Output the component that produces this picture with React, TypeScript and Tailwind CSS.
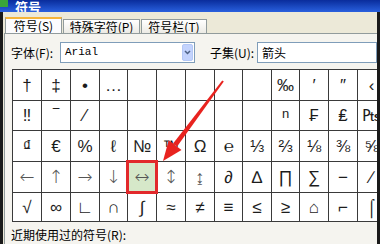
import React from "react"

const rows = [
  ["†", "‡", "•", "…", "", "", "", "", "", "‰", "′", "″", "‹"],
  ["‼", "‾", "⁄", "", "", "", "", "", "", "ⁿ", "₣", "₤", "₧"],
  ["₫", "€", "%", "ℓ", "№", "™", "Ω", "℮", "⅓", "⅔", "⅛", "⅜", "⅝"],
  ["←", "↑", "→", "↓", "↔", "↕", "↨", "∂", "∆", "∏", "∑", "−", "∕"],
  ["√", "∞", "∟", "∩", "∫", "≈", "≠", "≡", "≤", "≥", "⌂", "⌐", "⌠"],
]

const arrows = "←↑→↓↔↕↨"

const cjk = "font-['SimSun','Noto_Sans_CJK_SC',sans-serif]"

export default function App() {
  return (
    <div className="relative w-[380px] h-[244px] overflow-hidden bg-[#ECE9D8] flex flex-col">
      {/* Title bar */}
      <div className="h-[12px] shrink-0 bg-gradient-to-b from-[#0a2c9c] to-[#2a60de] flex items-end overflow-hidden">
        <div className="w-[8px] h-[7px] bg-[#3aa53a] self-start" />
        <span className={`ml-[7px] -mb-[1px] text-[13px] leading-[13px] font-bold text-white ${cjk}`}>符号</span>
      </div>

      <div className="flex flex-1 min-h-0">
        <div className="w-[3px] bg-[#1a1a1a]" />
        <div className="flex-1 min-w-0 flex flex-col overflow-hidden">
          {/* Tabs */}
          <div className="mt-[5px] h-[16px] flex items-end pl-[2px] shrink-0">
            <div className={`h-[16px] w-[57px] bg-[#fcfcfe] border-t-2 border-t-[#f5b43a] border-x border-[#919b9c] flex items-center justify-center text-[12px] text-black ${cjk}`}>
              符号(S)
            </div>
            <div className={`ml-[1px] h-[14px] w-[77px] bg-gradient-to-b from-white to-[#ecebe5] border-t border-x border-[#919b9c] flex items-center justify-center text-[12px] text-black ${cjk}`}>
              特殊字符(P)
            </div>
            <div className={`ml-[1px] h-[14px] w-[66px] bg-gradient-to-b from-white to-[#ecebe5] border-t border-x border-[#919b9c] flex items-center justify-center text-[12px] text-black ${cjk}`}>
              符号栏(T)
            </div>
          </div>

          {/* Panel */}
          <div className="flex-1 bg-[#f5f4ef] border-t border-l border-[#919b9c] ml-[1px] flex flex-col">
            <div className="mt-[8px] h-[21px] flex items-center">
              <span className={`ml-[6px] w-[49px] text-[12px] text-black ${cjk}`}>字体(F):</span>
              <div className="w-[135px] h-[21px] bg-white border border-[#7f9db9] flex items-center justify-between">
                <span className="ml-[4px] text-[11px] font-['Liberation_Mono',monospace] text-black">Arial</span>
                <div className="w-[11px] h-[17px] mr-[1px] bg-[#c3d3fd] border border-[#b4c8f6] rounded-[2px] flex items-center justify-center">
                  <svg width="7" height="5" viewBox="0 0 7 5">
                    <path d="M1 1 L3.5 3.5 L6 1" stroke="#4d6185" strokeWidth="1.5" fill="none" />
                  </svg>
                </div>
              </div>
              <span className={`ml-[15px] w-[47px] text-[12px] text-black ${cjk}`}>子集(U):</span>
              <div className="flex-1 h-[21px] bg-white border border-[#7f9db9] flex items-center">
                <span className={`ml-[4px] text-[12px] text-black ${cjk}`}>箭头</span>
              </div>
            </div>

            {/* Symbol grid */}
            <div className="mt-[6px] ml-[7px] w-max bg-[#3a3a3a] p-px grid gap-px grid-cols-[28px_28px_28px_27px_28px_28px_28px_27px_28px_27px_28px_28px_27px] grid-rows-[30px_29px_30px_30px_28px]">
              {rows.map((row, r) =>
                row.map((ch, c) => {
                  const sel = r === 3 && c === 4
                  const big = ch !== "" && arrows.includes(ch)
                  return (
                    <div
                      key={`${r}-${c}`}
                      className={`relative flex items-center justify-center leading-none ${big ? "font-['DejaVu_Sans',sans-serif] font-extralight text-[18px] text-[#555]" : "font-['Liberation_Sans','DejaVu_Sans',sans-serif] text-[17px] text-[#1c1c1c]"} ${sel ? "bg-[#d6e8c9] z-10" : "bg-white"}`}
                    >
                      {ch === "ⁿ" ? <span className="text-[13px] mt-[-4px]">n</span> : ch}
                      {sel && <span className="absolute -inset-[2px] border-[3px] border-[#e2292b]" />}
                    </div>
                  )
                })
              )}
            </div>

            <div className={`mt-[6px] ml-[6px] text-[12px] leading-[14px] text-black ${cjk}`}>近期使用过的符号(R):</div>
            <div className="mt-[3px] ml-[7px] flex-1 bg-white border border-[#7f9db9]" />
          </div>
        </div>
        <div className="w-[3px] bg-[#1a1a1a]" />
      </div>

      {/* Red annotation arrow */}
      <svg className="absolute inset-0 pointer-events-none" width="380" height="244" viewBox="0 0 380 244">
        <polygon points="222.2,80.4 223.8,81.6 177.1,146.6 173.1,143.6" fill="#e8231f" />
        <polygon points="163,161 181.5,149.9 168.7,140.3" fill="#e8231f" />
      </svg>
    </div>
  )
}
